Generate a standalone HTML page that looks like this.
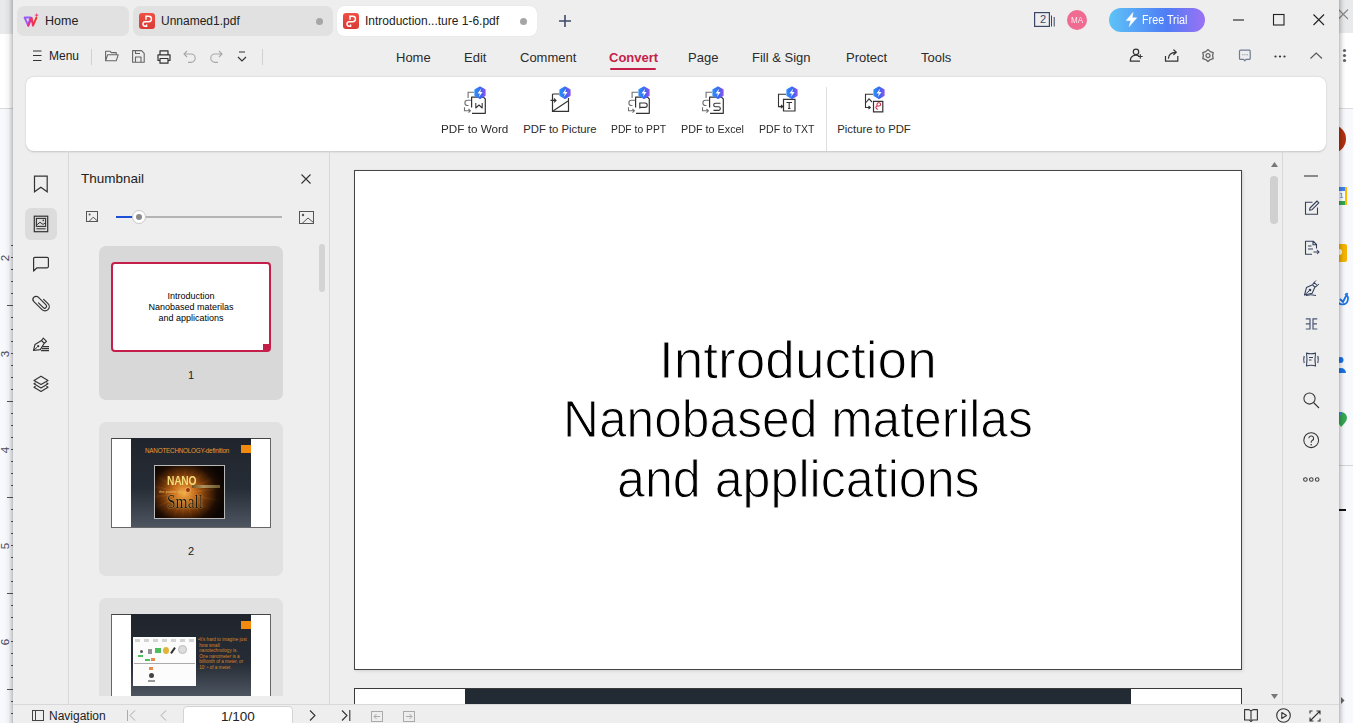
<!DOCTYPE html>
<html><head><meta charset="utf-8">
<style>
*{margin:0;padding:0;box-sizing:border-box}
html,body{width:1353px;height:723px;overflow:hidden;background:#f6f8fc;font-family:"Liberation Sans",sans-serif;color:#222}
div,span,svg{position:absolute}
svg{overflow:visible}
.t{white-space:nowrap;line-height:1}
.tab{top:6px;height:30px;border-radius:7px;background:#e1e1e1}
.pdfi{top:13px;width:16px;height:16px;border-radius:3px;background:linear-gradient(#ee5046,#d93a33)}
.dot{top:17.5px;width:7px;height:7px;border-radius:50%;background:#a6a6a6}
.rt{top:51px;font-size:13px;color:#2b2b2b}
.ct{top:124px;font-size:11.3px;color:#2b2b2b}
</style></head><body>
<!-- background windows -->
<div style="left:0;top:0;width:14px;height:34px;background:#e9eaeb"></div>
<div style="left:0;top:34px;width:14px;height:74px;background:#fff"></div>
<div style="left:0;top:108px;width:14px;height:1px;background:#d9d9d9"></div>
<div style="left:1338px;top:0;width:15px;height:33px;background:#e9eaeb"></div>
<div style="left:1338px;top:33px;width:15px;height:75px;background:#fff"></div>
<div style="left:1338px;top:108px;width:15px;height:1px;background:#dcdcdc"></div>

<div style="left:0;top:109px;width:14px;height:614px;background:#f7f9fd"></div>
<div style="left:11px;top:245.0px;width:1.6px;height:1px;background:#555"></div><div style="left:11px;top:257.0px;width:1.6px;height:1px;background:#555"></div><div style="left:11px;top:269.0px;width:1.6px;height:1px;background:#555"></div><div style="left:11px;top:281.0px;width:1.6px;height:1px;background:#555"></div><div style="left:11px;top:293.0px;width:1.6px;height:1px;background:#555"></div><div style="left:7.2px;top:305.0px;width:5.5px;height:1px;background:#555"></div><div style="left:11px;top:317.0px;width:1.6px;height:1px;background:#555"></div><div style="left:11px;top:329.0px;width:1.6px;height:1px;background:#555"></div><div style="left:11px;top:341.0px;width:1.6px;height:1px;background:#555"></div><div style="left:11px;top:353.0px;width:1.6px;height:1px;background:#555"></div><div style="left:11px;top:365.0px;width:1.6px;height:1px;background:#555"></div><div style="left:11px;top:377.0px;width:1.6px;height:1px;background:#555"></div><div style="left:11px;top:389.0px;width:1.6px;height:1px;background:#555"></div><div style="left:7.2px;top:401.0px;width:5.5px;height:1px;background:#555"></div><div style="left:11px;top:413.0px;width:1.6px;height:1px;background:#555"></div><div style="left:11px;top:425.0px;width:1.6px;height:1px;background:#555"></div><div style="left:11px;top:437.0px;width:1.6px;height:1px;background:#555"></div><div style="left:11px;top:449.0px;width:1.6px;height:1px;background:#555"></div><div style="left:11px;top:461.0px;width:1.6px;height:1px;background:#555"></div><div style="left:11px;top:473.0px;width:1.6px;height:1px;background:#555"></div><div style="left:11px;top:485.0px;width:1.6px;height:1px;background:#555"></div><div style="left:7.2px;top:497.0px;width:5.5px;height:1px;background:#555"></div><div style="left:11px;top:509.0px;width:1.6px;height:1px;background:#555"></div><div style="left:11px;top:521.0px;width:1.6px;height:1px;background:#555"></div><div style="left:11px;top:533.0px;width:1.6px;height:1px;background:#555"></div><div style="left:11px;top:545.0px;width:1.6px;height:1px;background:#555"></div><div style="left:11px;top:557.0px;width:1.6px;height:1px;background:#555"></div><div style="left:11px;top:569.0px;width:1.6px;height:1px;background:#555"></div><div style="left:11px;top:581.0px;width:1.6px;height:1px;background:#555"></div><div style="left:7.2px;top:593.0px;width:5.5px;height:1px;background:#555"></div><div style="left:11px;top:605.0px;width:1.6px;height:1px;background:#555"></div><div style="left:11px;top:617.0px;width:1.6px;height:1px;background:#555"></div><div style="left:11px;top:629.0px;width:1.6px;height:1px;background:#555"></div><div style="left:11px;top:641.0px;width:1.6px;height:1px;background:#555"></div><div style="left:11px;top:653.0px;width:1.6px;height:1px;background:#555"></div><div style="left:11px;top:665.0px;width:1.6px;height:1px;background:#555"></div><div style="left:11px;top:677.0px;width:1.6px;height:1px;background:#555"></div><div style="left:7.2px;top:689.0px;width:5.5px;height:1px;background:#555"></div><div style="left:11px;top:701.0px;width:1.6px;height:1px;background:#555"></div><div style="left:11px;top:713.0px;width:1.6px;height:1px;background:#555"></div>
<div class="t" style="left:0px;top:252.5px;width:10px;height:10px;font-size:11.5px;line-height:10px;color:#4a4a5a;text-align:center;transform:rotate(-90deg)">2</div><div class="t" style="left:0px;top:348.5px;width:10px;height:10px;font-size:11.5px;line-height:10px;color:#4a4a5a;text-align:center;transform:rotate(-90deg)">3</div><div class="t" style="left:0px;top:444.5px;width:10px;height:10px;font-size:11.5px;line-height:10px;color:#4a4a5a;text-align:center;transform:rotate(-90deg)">4</div><div class="t" style="left:0px;top:540.5px;width:10px;height:10px;font-size:11.5px;line-height:10px;color:#4a4a5a;text-align:center;transform:rotate(-90deg)">5</div><div class="t" style="left:0px;top:636.5px;width:10px;height:10px;font-size:11.5px;line-height:10px;color:#4a4a5a;text-align:center;transform:rotate(-90deg)">6</div>
<div style="left:4px;top:0;width:9px;height:723px;background:linear-gradient(90deg,rgba(0,0,0,0),rgba(0,0,0,.04) 50%,rgba(0,0,0,.16) 85%,rgba(0,0,0,.24))"></div>
<!-- right strip -->
<div style="left:1339px;top:109px;width:14px;height:614px;background:#f8f9fd"></div>
<svg style="left:1338px;top:9px" width="11" height="11"><path d="M0.5 0.5 L10 10 M10 0.5 L0.5 10" stroke="#888" stroke-width="1.1"/></svg>
<svg style="left:1342px;top:48px" width="5" height="15"><circle cx="2.5" cy="2.5" r="1.6" fill="#5f6368"/><circle cx="2.5" cy="7.5" r="1.6" fill="#5f6368"/><circle cx="2.5" cy="12.5" r="1.6" fill="#5f6368"/></svg>
<div style="left:1346px;top:125px;width:28px;height:28px;margin-left:-28px;border-radius:50%;background:#b3300f;clip-path:inset(0 0 0 50%)"></div>
<div style="left:1339px;top:187px;width:8px;height:18px;background:#fbbc04"></div>
<div style="left:1339px;top:187px;width:6px;height:4px;background:#4285f4"></div>
<div style="left:1339px;top:201px;width:6px;height:4px;background:#34a853"></div>
<div style="left:1339px;top:191px;width:6px;height:10px;background:#fff"></div>
<div class="t" style="left:1339px;top:192px;font-size:8px;color:#4285f4">1</div>
<div style="left:1339px;top:244px;width:8px;height:18px;border-radius:0 2px 2px 0;background:#f6b400"></div>
<div style="left:1339px;top:249px;width:3px;height:6px;border-radius:0 3px 3px 0;background:#fff"></div>
<svg style="left:1339px;top:291px" width="9" height="16"><path d="M-2 8 a5.5 5.5 0 1 0 8 -5 M1 8 L4 11 L8.5 2" fill="none" stroke="#1a73e8" stroke-width="1.8"/></svg>
<svg style="left:1339px;top:356px" width="7" height="18"><circle cx="1.5" cy="4" r="3" fill="#1a73e8"/><path d="M-3 17 a5 5 0 0 1 10 0 Z" fill="#1a73e8"/></svg>
<svg style="left:1339px;top:412px" width="8" height="15"><path d="M-4 6 a6 6 0 0 1 12 0 c0 3 -3 6 -6 9 Z" fill="#34a853"/><path d="M-4 6 a6 6 0 0 1 7 -5.8 L-1 8Z" fill="#4285f4"/></svg>
<div style="left:1339px;top:465px;width:14px;height:1px;background:#d5d5d5"></div>
<div style="left:1339px;top:509px;width:7px;height:2px;background:#111"></div>
<svg style="left:1341px;top:697px" width="4" height="7"><path d="M0 0 L3.5 3.5 L0 7Z" fill="#666"/></svg>
<div style="left:1339px;top:0;width:7px;height:723px;background:linear-gradient(90deg,rgba(0,0,0,.24),rgba(0,0,0,.14) 25%,rgba(0,0,0,.04) 60%,rgba(0,0,0,0))"></div>

<!-- window -->
<div id="win" style="left:13px;top:0;width:1326px;height:723px;background:#eeeeee"></div>

<!-- tabs -->
<div class="tab" style="left:17px;width:112px"></div>
<div class="tab" style="left:133px;width:200px"></div>
<div class="tab" style="left:337px;width:200px;background:#fff;box-shadow:0 0 1px rgba(0,0,0,.15)"></div>

<!-- tab contents -->
<svg style="left:20px;top:8px" width="24" height="24" viewBox="0 0 24 24">
<defs><linearGradient id="wg" x1="0" y1="0" x2="1" y2="0"><stop offset="0" stop-color="#e62aa0"/><stop offset="1" stop-color="#f23a22"/></linearGradient></defs>
<path d="M4.6 9.6 H10.4 L8.3 17.6 Z" fill="none" stroke="#9a5cf5" stroke-width="2" stroke-linejoin="round"/>
<path d="M8.3 17.6 L11.6 9.8 L13 17.6 L16.4 9.6" fill="none" stroke="url(#wg)" stroke-width="2" stroke-linejoin="round" stroke-linecap="round"/>
<path d="M16.6 5.2 L17.4 6.6 L18.8 7.2 L17.4 7.8 L16.6 9 L15.9 7.8 L14.5 7.2 L15.9 6.6 Z" fill="#ee3f8a"/>
</svg>
<div class="t" style="left:45px;top:15px;font-size:12.5px;color:#222">Home</div>

<div class="pdfi" style="left:139px"></div>
<svg style="left:139px;top:13px" width="16" height="16" viewBox="0 0 16 16"><path d="M7 6.7 V3.3 H9.7 A2.75 2.75 0 0 1 9.7 8.8 H6.2 A2.2 2.2 0 0 0 6.2 13.2 H7.6 V11.6" fill="none" stroke="#fff" stroke-width="1.45"/></svg>
<div class="t" style="left:161px;top:15px;font-size:12px;color:#222">Unnamed1.pdf</div>
<div class="dot" style="left:315.5px"></div>

<div class="pdfi" style="left:343px"></div>
<svg style="left:343px;top:13px" width="16" height="16" viewBox="0 0 16 16"><path d="M7 6.7 V3.3 H9.7 A2.75 2.75 0 0 1 9.7 8.8 H6.2 A2.2 2.2 0 0 0 6.2 13.2 H7.6 V11.6" fill="none" stroke="#fff" stroke-width="1.45"/></svg>
<div class="t" style="left:365px;top:15px;font-size:12px;color:#222">Introduction...ture 1-6.pdf</div>
<div class="dot" style="left:519.5px"></div>
<svg style="left:558px;top:14px" width="14" height="14" viewBox="0 0 14 14"><path d="M7 1 V13 M1 7 H13" stroke="#3d4a6a" stroke-width="1.6"/></svg>

<!-- title right -->
<svg style="left:1034px;top:12px" width="22" height="15" viewBox="0 0 22 15"><rect x="0.6" y="0.6" width="14.8" height="13.8" fill="none" stroke="#3b4766" stroke-width="1.2"/><path d="M17.5 3.5 V14.5 M20.2 5 V14.5" stroke="#3b4766" stroke-width="1"/></svg>
<div class="t" style="left:1040px;top:14px;font-size:11px;color:#3b4766">2</div>
<div style="left:1067px;top:10px;width:20px;height:20px;border-radius:50%;background:#ef6b91"></div>
<div class="t" style="left:1067px;top:16px;width:20px;text-align:center;font-size:8.5px;color:rgba(255,255,255,.88);transform:scaleX(.95)">MA</div>
<div style="left:1109px;top:8px;width:96px;height:24px;border-radius:12px;background:linear-gradient(90deg,#5ec3f7,#4f7df5 60%,#9b72f3)"></div>
<svg style="left:1125px;top:12px" width="13" height="15" viewBox="0 0 13 15"><path d="M8 0.5 L1.2 8.6 H5.8 L4.2 14.6 L11.8 5.8 H7.2 Z" fill="#fff" stroke="#fff" stroke-width=".5" stroke-linejoin="round"/></svg>
<div class="t" style="left:1142px;top:14px;font-size:12.5px;color:#fff;transform:scaleX(.86);transform-origin:0 0">Free Trial</div>
<svg style="left:1233px;top:19px" width="12" height="2"><path d="M0 1 H11" stroke="#222" stroke-width="1.1"/></svg>
<svg style="left:1273px;top:14px" width="12" height="12"><rect x="0.5" y="0.5" width="10.5" height="10.5" fill="none" stroke="#222" stroke-width="1.1"/></svg>
<svg style="left:1313px;top:14px" width="12" height="12"><path d="M0.5 0.5 L11 11 M11 0.5 L0.5 11" stroke="#222" stroke-width="1.1"/></svg>

<!-- toolbar row -->
<svg style="left:33px;top:50px" width="9" height="12"><path d="M0 1 H8.5 M0 5.5 H8.5 M0 10.5 H8.5" stroke="#333" stroke-width="1.1"/></svg>
<div class="t" style="left:49px;top:50px;font-size:12px;color:#222">Menu</div>
<div style="left:91px;top:49px;width:1px;height:16px;background:#d0d0d0"></div>
<svg style="left:105px;top:50px" width="14" height="12" viewBox="0 0 14 12"><path d="M0.6 10.8 V1.2 H5 L6.3 2.6 H11.2 V4.5 M0.6 10.8 L2.6 4.8 H13.2 L11.2 10.8 Z" fill="none" stroke="#666" stroke-width="1.1" stroke-linejoin="round"/></svg>
<svg style="left:132px;top:50px" width="13" height="13" viewBox="0 0 13 13"><path d="M0.6 0.6 H9.5 L12.2 3.3 V12.2 H0.6 Z M3.5 12.2 V7 H9 V12.2 M3.5 0.6 V3.5 H8" fill="none" stroke="#666" stroke-width="1.1" stroke-linejoin="round"/></svg>
<svg style="left:157px;top:49.5px" width="14" height="14" viewBox="0 0 14 14"><path d="M3 4.5 V0.8 H11 V4.5 M3 10.5 H1 V4.8 H13 V10.5 H11 M3 8.5 H11 V13.2 H3 Z" fill="none" stroke="#333" stroke-width="1.2" stroke-linejoin="round"/></svg>
<svg style="left:183px;top:50px" width="14" height="13" viewBox="0 0 14 13"><path d="M4 1 L1 4 L4 7 M1 4 H8 a4.2 4.2 0 0 1 0 8.4 H5" fill="none" stroke="#a8a8a8" stroke-width="1.1"/></svg>
<svg style="left:209px;top:50px" width="14" height="13" viewBox="0 0 14 13"><path d="M10 1 L13 4 L10 7 M13 4 H6 a4.2 4.2 0 0 0 0 8.4 H9" fill="none" stroke="#a8a8a8" stroke-width="1.1"/></svg>
<svg style="left:237px;top:51px" width="10" height="13" viewBox="0 0 10 13"><path d="M2 1 H8 M1 6 L5 10 L9 6" fill="none" stroke="#333" stroke-width="1.2"/></svg>
<div style="left:262px;top:49px;width:1px;height:16px;background:#d0d0d0"></div>

<div class="t rt" style="left:396px">Home</div>
<div class="t rt" style="left:464px">Edit</div>
<div class="t rt" style="left:520px">Comment</div>
<div class="t rt" style="left:609px;font-weight:bold;color:#c41f4b">Convert</div>
<div style="left:610px;top:68px;width:46px;height:2px;border-radius:1px;background:#c41f4b"></div>
<div class="t rt" style="left:688px">Page</div>
<div class="t rt" style="left:752px">Fill &amp; Sign</div>
<div class="t rt" style="left:846px">Protect</div>
<div class="t rt" style="left:921px">Tools</div>

<!-- row2 right icons -->
<svg style="left:1125px;top:45px" width="20" height="20" viewBox="0 0 20 20"><circle cx="11" cy="6.9" r="2.7" fill="none" stroke="#333" stroke-width="1.2"/><path d="M14 11.2 A5.5 5.5 0 0 0 5.3 15.8 V16.2 H14.5" fill="none" stroke="#333" stroke-width="1.2" stroke-linecap="round" stroke-linejoin="round"/><path d="M13 11.5 H17.6 M15.3 9.2 V13.8" stroke="#333" stroke-width="1.1"/></svg>
<svg style="left:1160px;top:45px" width="20" height="20" viewBox="0 0 20 20"><path d="M5.5 11 V16.2 H17.8 V11" fill="none" stroke="#333" stroke-width="1.2" stroke-linejoin="round"/><path d="M8.5 13.2 C8.8 9.5 11.5 7.5 15.5 7.3 M13.8 5 L16.3 7.3 L13.8 9.5" fill="none" stroke="#333" stroke-width="1.2" stroke-linecap="round" stroke-linejoin="round"/></svg>
<svg style="left:1198px;top:45px" width="20" height="20" viewBox="0 0 20 20"><path d="M10.00 4.60 L12.30 6.62 L15.20 7.60 L14.60 10.60 L15.20 13.60 L12.30 14.58 L10.00 16.60 L7.70 14.58 L4.80 13.60 L5.40 10.60 L4.80 7.60 L7.70 6.62 Z" fill="none" stroke="#666" stroke-width="1.3" stroke-linejoin="round"/><circle cx="10" cy="10.6" r="2" fill="none" stroke="#666" stroke-width="1.2"/></svg>
<svg style="left:1235px;top:45px" width="20" height="20" viewBox="0 0 20 20"><path d="M4.5 6.2 a1 1 0 0 1 1 -1 H14.2 a1 1 0 0 1 1 1 V13.4 a1 1 0 0 1 -1 1 H11 L9.8 15.8 L8.6 14.4 H5.5 a1 1 0 0 1 -1 -1 Z" fill="none" stroke="#6e7c92" stroke-width="1.2" stroke-linejoin="round"/><path d="M7.3 9.8 h1 M9.5 9.8 h1 M11.7 9.8 h1" stroke="#6e7c92" stroke-width="1.1"/></svg>
<svg style="left:1274px;top:55px" width="13" height="3"><circle cx="1.5" cy="1.5" r="1.1" fill="#333"/><circle cx="6" cy="1.5" r="1.1" fill="#333"/><circle cx="10.5" cy="1.5" r="1.1" fill="#333"/></svg>
<svg style="left:1310px;top:52px" width="13" height="8"><path d="M0.5 6.5 L6.2 1 L12 6.5" fill="none" stroke="#555" stroke-width="1.1"/></svg>

<!-- ribbon panel -->
<div style="left:26px;top:77px;width:1300px;height:74px;border-radius:8px;background:#fff;box-shadow:0 0.5px 2px rgba(0,0,0,.18)"></div>
<div style="left:826px;top:87px;width:1px;height:64px;background:#dedede"></div>
<div class="t ct" style="left:441.2px;transform:scaleX(1.035);transform-origin:0 0">PDF to Word</div>
<div class="t ct" style="left:523.2px">PDF to Picture</div>
<div class="t ct" style="left:611.2px;transform:scaleX(.915);transform-origin:0 0">PDF to PPT</div>
<div class="t ct" style="left:681.4px;transform:scaleX(.955);transform-origin:0 0">PDF to Excel</div>
<div class="t ct" style="left:759px;transform:scaleX(.935);transform-origin:0 0">PDF to TXT</div>
<div class="t ct" style="left:837.3px">Picture to PDF</div>

<!-- left sidebar -->
<div style="left:68px;top:151px;width:1px;height:553px;background:#d8d8d8"></div>
<div style="left:25px;top:208px;width:32px;height:32px;border-radius:6px;background:#dcdcdc"></div>
<!-- thumbnail panel -->
<div style="left:329px;top:151px;width:1px;height:553px;background:#d8d8d8"></div>
<div class="t" style="left:81px;top:172px;font-size:13.5px;color:#222">Thumbnail</div>
<svg style="left:301px;top:174px" width="10" height="10"><path d="M0.5 0.5 L9.5 9.5 M9.5 0.5 L0.5 9.5" stroke="#333" stroke-width="1.1"/></svg>
<svg style="left:86px;top:211px" width="12" height="11" viewBox="0 0 12 11"><rect x="0.5" y="0.5" width="11" height="10" fill="none" stroke="#555" stroke-width="1"/><circle cx="3.6" cy="3.6" r="1" fill="#555"/><path d="M3 10.5 L7.2 6.2 L11.5 10" fill="none" stroke="#555" stroke-width="1"/></svg>
<div style="left:116px;top:215.5px;width:23px;height:2px;background:#1f4fd6"></div>
<div style="left:139px;top:215.5px;width:143px;height:2px;background:#b4b4b4"></div>
<div style="left:132px;top:210px;width:14px;height:14px;border-radius:50%;background:#fff;border:1px solid #c8c8c8"></div>
<div style="left:136px;top:214px;width:6px;height:6px;border-radius:50%;background:#8a8a8a"></div>
<svg style="left:299px;top:211px" width="15" height="13" viewBox="0 0 15 13"><rect x="0.5" y="0.5" width="14" height="12" fill="none" stroke="#555" stroke-width="1"/><circle cx="4" cy="4" r="1.2" fill="#555"/><path d="M3 12.5 L9 7 L14.5 11.5" fill="none" stroke="#555" stroke-width="1"/></svg>
<div style="left:319px;top:244px;width:6px;height:48px;border-radius:3px;background:#d4d4d4"></div>

<!-- cards -->
<div style="left:99px;top:246px;width:184px;height:154px;border-radius:7px;background:#d8d8d8"></div>
<div style="left:111px;top:262px;width:160px;height:90px;border-radius:4px;background:#fff;border:2px solid #c41f4b"></div>
<div style="left:263px;top:344px;width:6px;height:6px;background:#c41f4b"></div>
<div class="t" style="left:111px;top:291px;width:160px;text-align:center;font-size:9px;line-height:11px;color:#000">Introduction<br>Nanobased materilas<br>and applications</div>
<div class="t" style="left:99px;top:370px;width:184px;text-align:center;font-size:11px;color:#222">1</div>

<div style="left:99px;top:422px;width:184px;height:154px;border-radius:7px;background:#e1e1e1"></div>
<div style="left:111px;top:438px;width:160px;height:90px;background:#fff;border:1px solid #666;border-top-color:#444"></div>
<div style="left:131px;top:438px;width:120px;height:89px;background:linear-gradient(#20252d 0%,#262c35 55%,#4d5561 100%)"></div>
<div class="t" style="left:145px;top:448px;font-size:6.3px;color:#f0962e;letter-spacing:-0.2px">NANOTECHNOLOGY-definition</div>
<div style="left:241px;top:445px;width:10px;height:8px;background:#f28a10"></div>
<div style="left:154px;top:465px;width:71px;height:54px;background:radial-gradient(ellipse 60% 70% at 42% 52%,#f5b04a 0%,#c46a1a 28%,#6a3208 55%,#1d0c03 80%,#0a0502 100%);border:1px solid #b8b8b8"></div>
<div style="left:155px;top:466px;width:69px;height:52px;background:repeating-conic-gradient(from 0deg at 42% 52%,rgba(255,190,90,.12) 0deg 5deg,rgba(0,0,0,0) 5deg 20deg);-webkit-mask-image:radial-gradient(ellipse at 42% 52%,#000 20%,transparent 70%)"></div>
<div class="t" style="left:167px;top:475px;font-size:12.5px;font-weight:bold;color:#f3dc7a;transform:scaleX(.82);transform-origin:0 0;letter-spacing:-.3px">NANO</div>
<div style="left:192px;top:485px;width:28px;height:3px;background:linear-gradient(90deg,#6a5020,#b8a570 40%,#7a6430);opacity:.85"></div>
<div style="left:185px;top:487px;width:6px;height:6px;border-radius:50%;background:#a0300a;border:1px solid #e8b060"></div>
<div class="t" style="left:159px;top:490px;font-size:4px;color:#e8c070">the power of</div>
<div class="t" style="left:167px;top:493px;font-family:'Liberation Serif';font-size:18px;color:#1c1408;text-shadow:0 0 1px #e8c070,0 0 1px #e8c070;transform:scaleX(.86);transform-origin:0 0">Small</div>
<div class="t" style="left:99px;top:546px;width:184px;text-align:center;font-size:11px;color:#222">2</div>

<div style="left:99px;top:598px;width:184px;height:98px;border-radius:7px 7px 0 0;background:#e1e1e1"></div>
<div style="left:111px;top:614px;width:160px;height:82px;background:#fff;border:1px solid #666;border-top-color:#444;border-bottom:none"></div>
<div style="left:131px;top:614px;width:120px;height:82px;background:linear-gradient(#20252d 0%,#262c35 60%,#4d5561 100%)"></div>
<div style="left:241px;top:621px;width:10px;height:8px;background:#f28a10"></div>
<div style="left:133px;top:637px;width:63px;height:49px;background:#fcfcfc"></div>
<div style="left:135px;top:639px;width:59px;height:3px;background:repeating-linear-gradient(90deg,#888 0 5px,transparent 5px 9px);opacity:.35"></div>
<div style="left:140px;top:650px;width:3px;height:3px;border-radius:50%;background:#555"></div>
<div style="left:148px;top:649px;width:4px;height:5px;background:#666;opacity:.7"></div>
<div style="left:155px;top:648px;width:6px;height:5px;background:#4cbf5a"></div>
<div style="left:163px;top:647px;width:6px;height:7px;border-radius:50%;background:#e0b43a"></div>
<div style="left:172px;top:647px;width:2px;height:7px;background:#333;transform:rotate(35deg)"></div>
<div style="left:178px;top:645px;width:9px;height:9px;border-radius:50%;background:#ddd;border:1px solid #bbb"></div>
<div style="left:138px;top:655px;width:5px;height:2px;background:#4cbf5a"></div>
<div style="left:145px;top:659px;width:5px;height:2px;background:#4cbf5a"></div>
<div style="left:151px;top:658px;width:4px;height:3px;background:#e98a4a"></div>
<div style="left:134px;top:663px;width:61px;height:1px;background:#aaa"></div>
<div style="left:149px;top:667px;width:4px;height:3px;background:#e98a4a"></div>
<div style="left:149px;top:673px;width:5px;height:5px;border-radius:50%;background:#444"></div>
<div style="left:148px;top:680px;width:7px;height:2px;background:#999"></div>
<div class="t" style="left:198px;top:637px;font-size:4.6px;line-height:5.6px;color:#d8832a">&bull;It's hard to imagine just<br>&nbsp;how small<br>&nbsp;nanotechnology is.<br>&nbsp;One nanometer is a<br>&nbsp;billionth of a meter, or<br>&nbsp;10&#8315;&#8313; of a meter.</div>

<!-- document area -->
<div style="left:354px;top:170px;width:888px;height:500px;background:#fff;border:1px solid #444;box-shadow:1px 1px 3px rgba(0,0,0,.12)"></div>
<div class="t" id="l1" style="left:659.4px;top:334.8px;font-size:51px;color:#000;-webkit-text-stroke:1px #fff;paint-order:fill stroke;transform:scaleX(1.042);transform-origin:0 0">Introduction</div>
<div class="t" id="l2" style="left:563px;top:394.3px;font-size:51px;color:#000;-webkit-text-stroke:1px #fff;paint-order:fill stroke;transform:scaleX(.975);transform-origin:0 0">Nanobased materilas</div>
<div class="t" id="l3" style="left:616.8px;top:454.1px;font-size:51px;color:#000;-webkit-text-stroke:1px #fff;paint-order:fill stroke;transform:scaleX(.984);transform-origin:0 0">and applications</div>
<div style="left:354px;top:688px;width:888px;height:16px;background:#fff;border:1px solid #3a3a3a;border-bottom:none"></div>
<div style="left:465px;top:689px;width:666px;height:15px;background:#222a33"></div>

<!-- scrollbar -->
<svg style="left:1270.5px;top:161.5px" width="7" height="5"><path d="M3.5 0 L7 5 H0Z" fill="#777"/></svg>
<div style="left:1270px;top:176px;width:8px;height:48px;border-radius:4px;background:#d0d0d0"></div>
<svg style="left:1270.5px;top:693.5px" width="7" height="5"><path d="M0 0 H7 L3.5 5Z" fill="#777"/></svg>

<!-- right panel -->
<div style="left:1282px;top:151px;width:1px;height:553px;background:#d8d8d8"></div>

<!-- status bar -->
<div style="left:13px;top:704px;width:1326px;height:1px;background:#d8d8d8"></div>
<svg style="left:32px;top:710px" width="12" height="11" viewBox="0 0 12 11"><rect x="0.5" y="0.5" width="11" height="10" fill="none" stroke="#444" stroke-width="1"/><path d="M3.5 0.5 V10.5" stroke="#444" stroke-width="1"/></svg>
<div class="t" style="left:49px;top:710px;font-size:12px;color:#222">Navigation</div>
<svg style="left:127px;top:710px" width="9" height="11"><path d="M0.5 0 V11 M8 0.5 L3 5.5 L8 10.5" fill="none" stroke="#aaa" stroke-width="1"/></svg>
<svg style="left:160px;top:710px" width="7" height="11"><path d="M6 0.5 L1 5.5 L6 10.5" fill="none" stroke="#aaa" stroke-width="1"/></svg>
<div style="left:183px;top:706px;width:110px;height:20px;border-radius:4px;background:#fff;border:1px solid #d4d4d4"></div>
<div class="t" style="left:183px;top:710px;width:110px;text-align:center;font-size:13.5px;color:#222">1/100</div>
<svg style="left:309px;top:710px" width="7" height="11"><path d="M1 0.5 L6 5.5 L1 10.5" fill="none" stroke="#333" stroke-width="1.1"/></svg>
<svg style="left:341px;top:710px" width="10" height="11"><path d="M1 0.5 L6 5.5 L1 10.5 M8.8 0 V11" fill="none" stroke="#333" stroke-width="1.1"/></svg>
<svg style="left:371px;top:711px" width="12" height="11" viewBox="0 0 12 11"><rect x="0.5" y="0.5" width="11" height="10" fill="none" stroke="#aaa" stroke-width="1"/><path d="M9 5.5 H3 M5.5 3 L3 5.5 L5.5 8" fill="none" stroke="#aaa" stroke-width="1"/></svg>
<svg style="left:403px;top:711px" width="12" height="11" viewBox="0 0 12 11"><rect x="0.5" y="0.5" width="11" height="10" fill="none" stroke="#aaa" stroke-width="1"/><path d="M3 5.5 H9 M6.5 3 L9 5.5 L6.5 8" fill="none" stroke="#aaa" stroke-width="1"/></svg>
<svg style="left:1244px;top:709px" width="14" height="13" viewBox="0 0 14 13"><path d="M0.6 0.6 H5 L7 2 L9 0.6 H13.4 V11 H8.5 L7 12.5 L5.5 11 H0.6 Z M7 2 V11" fill="none" stroke="#333" stroke-width="1.1" stroke-linejoin="round"/></svg>
<svg style="left:1276px;top:708px" width="15" height="15" viewBox="0 0 15 15"><circle cx="7.5" cy="7.5" r="6.8" fill="none" stroke="#333" stroke-width="1.1"/><path d="M5.8 4.5 L10.5 7.5 L5.8 10.5 Z" fill="none" stroke="#333" stroke-width="1.1" stroke-linejoin="round"/></svg>
<svg style="left:1309px;top:710px" width="12" height="12" viewBox="0 0 12 12"><path d="M7.5 1 H11 V4.5 M11 1 L1 11 M1 7.5 V11 H4.5 M1 3.5 V1 H3.5 M8.5 11 H11 V8.5" fill="none" stroke="#333" stroke-width="1.1"/></svg>
<svg width="0" height="0" style="left:0;top:0"><defs><linearGradient id="bg1" x1="0" y1="0" x2="1" y2="0"><stop offset="0" stop-color="#2b8ff9"/><stop offset=".6" stop-color="#3c63f2"/><stop offset="1" stop-color="#8a55ee"/></linearGradient></defs></svg>
<svg style="left:458px;top:84px" width="34" height="34" viewBox="0 0 34 34"><path d="M10.1 14 V8.2 H16" fill="none" stroke="#707070" stroke-width="1.1"/><path d="M13.3 16.3 H9.5 a2.6 2.6 0 0 0 0 5.2 H10.5" fill="none" stroke="#707070" stroke-width="1.1"/><path d="M6.5 23.3 V26.8 H12.3 M10.5 25 L12.4 26.8 L10.5 28.6" fill="none" stroke="#707070" stroke-width="1.1"/><path d="M13.6 23.5 V13.2 H25.5 L27.3 15 V29.3 H14" fill="none" stroke="#333" stroke-width="1.2" stroke-linejoin="round"/><path d="M17.8 19 V24 L21 21 L24.2 24 V19" fill="none" stroke="#333" stroke-width="1.05" stroke-linejoin="round"/><path d="M22 2.9 L27 5.8 V11.6 L22 14.5 L17 11.6 V5.8 Z" fill="url(#bg1)" stroke="url(#bg1)" stroke-width="1.2" stroke-linejoin="round"/><path d="M23.2 4.6 L19.5 9.5 H21.9 L20.9 12.9 L24.6 8 H22.2 Z" fill="#fff"/></svg>
<svg style="left:622px;top:84px" width="34" height="34" viewBox="0 0 34 34"><path d="M10.1 14 V8.2 H16" fill="none" stroke="#707070" stroke-width="1.1"/><path d="M13.3 16.3 H9.5 a2.6 2.6 0 0 0 0 5.2 H10.5" fill="none" stroke="#707070" stroke-width="1.1"/><path d="M6.5 23.3 V26.8 H12.3 M10.5 25 L12.4 26.8 L10.5 28.6" fill="none" stroke="#707070" stroke-width="1.1"/><path d="M13.6 23.5 V13.2 H25.5 L27.3 15 V29.3 H14" fill="none" stroke="#333" stroke-width="1.2" stroke-linejoin="round"/><path d="M17.8 24.5 V19 H23 a2.2 2.2 0 0 1 0 4.4 H17.8" fill="none" stroke="#333" stroke-width="1.1"/><path d="M22 2.9 L27 5.8 V11.6 L22 14.5 L17 11.6 V5.8 Z" fill="url(#bg1)" stroke="url(#bg1)" stroke-width="1.2" stroke-linejoin="round"/><path d="M23.2 4.6 L19.5 9.5 H21.9 L20.9 12.9 L24.6 8 H22.2 Z" fill="#fff"/></svg>
<svg style="left:696px;top:84px" width="34" height="34" viewBox="0 0 34 34"><path d="M10.1 14 V8.2 H16" fill="none" stroke="#707070" stroke-width="1.1"/><path d="M13.3 16.3 H9.5 a2.6 2.6 0 0 0 0 5.2 H10.5" fill="none" stroke="#707070" stroke-width="1.1"/><path d="M6.5 23.3 V26.8 H12.3 M10.5 25 L12.4 26.8 L10.5 28.6" fill="none" stroke="#707070" stroke-width="1.1"/><path d="M13.6 23.5 V13.2 H25.5 L27.3 15 V29.3 H14" fill="none" stroke="#333" stroke-width="1.2" stroke-linejoin="round"/><path d="M24.5 19.2 H19.5 a1.8 1.8 0 0 0 0 3.6 H22.5 a1.8 1.8 0 0 1 0 3.6 H17.5" fill="none" stroke="#333" stroke-width="1.1"/><path d="M22 2.9 L27 5.8 V11.6 L22 14.5 L17 11.6 V5.8 Z" fill="url(#bg1)" stroke="url(#bg1)" stroke-width="1.2" stroke-linejoin="round"/><path d="M23.2 4.6 L19.5 9.5 H21.9 L20.9 12.9 L24.6 8 H22.2 Z" fill="#fff"/></svg>
<svg style="left:543px;top:84px" width="34" height="34" viewBox="0 0 34 34"><path d="M9.5 10 H16.5 M9.5 10 V27.4 H25.5 V14" fill="none" stroke="#333" stroke-width="1.2"/><path d="M7.5 16.4 H13 M11 14.5 L13 16.4 L11 18.3" fill="none" stroke="#333" stroke-width="1.1"/><path d="M10 27 L25 17" fill="none" stroke="#333" stroke-width="1.2"/><path d="M22 2.9 L27 5.8 V11.6 L22 14.5 L17 11.6 V5.8 Z" fill="url(#bg1)" stroke="url(#bg1)" stroke-width="1.2" stroke-linejoin="round"/><path d="M23.2 4.6 L19.5 9.5 H21.9 L20.9 12.9 L24.6 8 H22.2 Z" fill="#fff"/></svg>
<svg style="left:770px;top:84px" width="34" height="34" viewBox="0 0 34 34"><path d="M16 10.2 H8.5 V22.6 H12.5 M11 21 L12.8 22.6 L11 24.2" fill="none" stroke="#333" stroke-width="1.1"/><path d="M13.5 15.3 H25 V27 H13.5 Z" fill="#fff" stroke="#333" stroke-width="1.2"/><path d="M16.5 18.5 H22 M19.2 18.5 V24.5 M18 24.5 H20.5" fill="none" stroke="#333" stroke-width="1.1"/><path d="M22 2.9 L27 5.8 V11.6 L22 14.5 L17 11.6 V5.8 Z" fill="url(#bg1)" stroke="url(#bg1)" stroke-width="1.2" stroke-linejoin="round"/><path d="M23.2 4.6 L19.5 9.5 H21.9 L20.9 12.9 L24.6 8 H22.2 Z" fill="#fff"/></svg>
<svg style="left:857px;top:84px" width="34" height="34" viewBox="0 0 34 34"><path d="M16 10.2 H8.5 V23.5 H13 M11.5 22 L13.3 23.5 L11.5 25" fill="none" stroke="#333" stroke-width="1.1"/><path d="M9 18.5 L12 14.8 L15 18" fill="none" stroke="#333" stroke-width="1.1"/><path d="M16.5 17.3 H25.8 V27.8 H16.5 Z" fill="#fff" stroke="#333" stroke-width="1.2"/><path d="M20 22.5 V20.3 a1.5 1.5 0 0 1 1.5 -1.5 h0.5 a1.6 1.6 0 0 1 0 3.2 h-1.5 a1.6 1.6 0 0 0 0 3.2 h0.6" fill="none" stroke="#d02a4a" stroke-width="1.1"/><path d="M22 2.9 L27 5.8 V11.6 L22 14.5 L17 11.6 V5.8 Z" fill="url(#bg1)" stroke="url(#bg1)" stroke-width="1.2" stroke-linejoin="round"/><path d="M23.2 4.6 L19.5 9.5 H21.9 L20.9 12.9 L24.6 8 H22.2 Z" fill="#fff"/></svg>
<svg style="left:33px;top:175px" width="16" height="18" viewBox="0 0 16 18"><path d="M1.5 1.2 H14.2 V16.8 L7.85 12.2 L1.5 16.8 Z" fill="none" stroke="#333" stroke-width="1.2" stroke-linejoin="miter"/></svg>
<svg style="left:33px;top:215px" width="16" height="18" viewBox="0 0 16 18"><rect x="1.3" y="1.2" width="13.4" height="15.5" fill="none" stroke="#333" stroke-width="1.2"/><rect x="3.4" y="3.4" width="9.2" height="8" fill="none" stroke="#333" stroke-width="1.1"/><path d="M3.6 10 L7 7.3 L10 9.4 L12.5 7.8" fill="none" stroke="#333" stroke-width="1"/><circle cx="10.3" cy="5.4" r=".8" fill="#333"/><path d="M3.4 13.8 H12.6" stroke="#333" stroke-width="1"/></svg>
<svg style="left:32px;top:256px" width="18" height="16" viewBox="0 0 18 16"><path d="M1.6 15 V2.6 a1.2 1.2 0 0 1 1.2 -1.2 H15.2 a1.2 1.2 0 0 1 1.2 1.2 V10.6 a1.2 1.2 0 0 1 -1.2 1.2 H5 Z" fill="none" stroke="#333" stroke-width="1.2" stroke-linejoin="round"/></svg>
<svg style="left:32px;top:296px" width="18" height="17" viewBox="0 0 18 17"><path d="M6.5 6.8 L11.3 11.6 a1.9 1.9 0 0 0 2.7 -2.7 L6.3 1.2 a3.1 3.1 0 0 0 -4.4 4.4 L10 13.7 a4.2 4.2 0 0 0 6 -6 L11.6 3.3" fill="none" stroke="#333" stroke-width="1.2" stroke-linecap="round"/></svg>
<svg style="left:32px;top:336px" width="18" height="16" viewBox="0 0 18 16"><path d="M1.5 14.5 L3 8.5 L9.5 4.5 L12.3 7.3 L8.3 13.6 Z M9.5 4.5 L11.3 2.2 L14.5 5.4 L12.3 7.3" fill="none" stroke="#333" stroke-width="1.15" stroke-linejoin="round"/><circle cx="6.2" cy="10.2" r="1.1" fill="#333"/><path d="M1.5 14.5 L5.4 11" stroke="#333" stroke-width="1"/><path d="M10.5 10.6 H17 M10 12.6 H17 M9 14.6 H17" stroke="#333" stroke-width="1.1"/></svg>
<svg style="left:32px;top:375px" width="18" height="18" viewBox="0 0 18 18"><path d="M9 1.2 L16 5.4 L9 9.6 L2 5.4 Z" fill="none" stroke="#333" stroke-width="1.15" stroke-linejoin="round"/><path d="M3.6 7.8 L2 8.8 L9 13 L16 8.8 L14.4 7.8" fill="none" stroke="#333" stroke-width="1.15" stroke-linejoin="round"/><path d="M3.6 11.2 L2 12.2 L9 16.4 L16 12.2 L14.4 11.2" fill="none" stroke="#333" stroke-width="1.15" stroke-linejoin="round"/></svg>
<div style="left:1304px;top:175px;width:14px;height:2px;background:#8a8a8a"></div>
<svg style="left:1304px;top:200px" width="16" height="16" viewBox="0 0 16 16"><path d="M8.5 2.2 H1.5 V14.2 H13.5 V7.5" fill="none" stroke="#33405c" stroke-width="1.1"/><path d="M5.5 10.2 L6 8 L13 1 L14.8 2.8 L7.8 9.8 Z" fill="none" stroke="#33405c" stroke-width="1.1" stroke-linejoin="round"/></svg>
<svg style="left:1304px;top:240px" width="16" height="16" viewBox="0 0 16 16"><path d="M8 14.2 H1.5 V1.2 H9.2 L12.5 4.5 V8.5 M9 1.2 V4.8 H12.5 M4 6 H7.5 M4 9 H9" fill="none" stroke="#33405c" stroke-width="1.1" stroke-linejoin="round"/><path d="M9.5 12 H15 M13 10 L15 12 L13 14" fill="none" stroke="#33405c" stroke-width="1.05"/></svg>
<svg style="left:1303px;top:280px" width="16" height="16" viewBox="0 0 16 16"><path d="M1.5 15 L3.5 7.5 L9.5 4.8 L11.8 7.2 L9.2 13.2 Z M9.5 4.8 L11.2 2.5 L14.2 5.6 L11.8 7.2" fill="none" stroke="#33405c" stroke-width="1.05" stroke-linejoin="round"/><circle cx="7" cy="10" r="1.3" fill="#33405c"/><path d="M1.5 15 L6 11 M3 15.5 Q8 14 13 15.5" fill="none" stroke="#33405c" stroke-width="1"/><path d="M11 2.5 L13 0.5 M14.2 5.6 L16 4" stroke="#33405c" stroke-width="1"/></svg>
<svg style="left:1305px;top:318px" width="13" height="12" viewBox="0 0 13 12"><path d="M0.8 0.8 H5 V11 H0.8 M0.8 5.9 H5 M12.3 0.8 H8 V11 H12.3 M8 5.9 H12" fill="none" stroke="#4b5672" stroke-width="1.2"/></svg>
<svg style="left:1303px;top:352px" width="16" height="15" viewBox="0 0 16 15"><path d="M3.5 1 Q5.5 1.8 8 1.8 Q10.5 1.8 12.5 1 Q11.5 7.5 12.5 14 Q10.5 13.2 8 13.2 Q5.5 13.2 3.5 14 Q4.5 7.5 3.5 1 Z" fill="none" stroke="#33405c" stroke-width="1.05" stroke-linejoin="round"/><path d="M1.2 4 Q0.2 7.5 1.2 11 M14.8 4 Q15.8 7.5 14.8 11 M6 5.5 H10 M6 8 H8.5" fill="none" stroke="#33405c" stroke-width="1.1"/></svg>
<svg style="left:1303px;top:392px" width="17" height="17" viewBox="0 0 17 17"><circle cx="6.5" cy="6.5" r="5.6" fill="none" stroke="#333" stroke-width="1.05"/><path d="M10.5 10.5 L16 16" stroke="#333" stroke-width="1.1"/></svg>
<svg style="left:1303px;top:432px" width="17" height="17" viewBox="0 0 17 17"><circle cx="8.2" cy="8.2" r="7.4" fill="none" stroke="#333" stroke-width="1.05"/><path d="M5.8 6.3 a2.4 2.4 0 1 1 3.4 2.2 c-0.7 0.4 -1 0.8 -1 1.6 V10.8" fill="none" stroke="#333" stroke-width="1.05"/><circle cx="8.2" cy="12.8" r=".8" fill="#333"/></svg>
<svg style="left:1303px;top:477px" width="17" height="5" viewBox="0 0 17 5"><circle cx="2.4" cy="2.5" r="1.8" fill="none" stroke="#444" stroke-width="1.1"/><circle cx="8.3" cy="2.5" r="1.8" fill="none" stroke="#444" stroke-width="1.1"/><circle cx="14.2" cy="2.5" r="1.8" fill="none" stroke="#444" stroke-width="1.1"/></svg>
</body></html>
